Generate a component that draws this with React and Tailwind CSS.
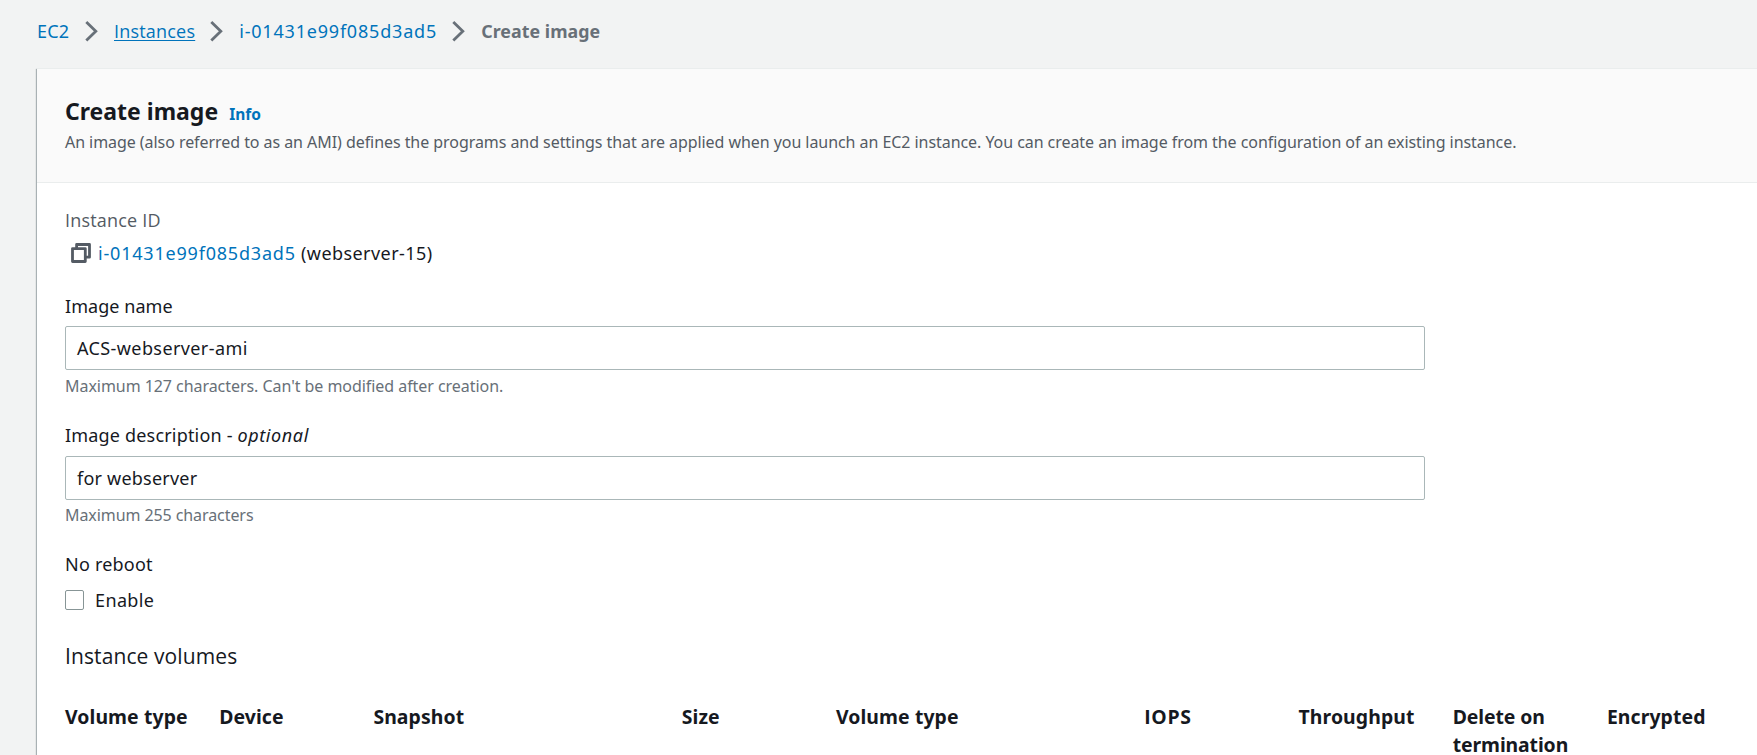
import React from "react";

function Chevron() {
  return (
    <svg className="mt-[2px] h-[21px] w-[13px] shrink-0" viewBox="0 0 13 21" fill="none" stroke="#687078" strokeWidth="2.8">
      <path d="M1.3 1L10.8 10.3L1.3 19.6" />
    </svg>
  );
}

function CopyIcon() {
  return (
    <svg className="mt-[2px] h-[20px] w-[20px] shrink-0" viewBox="0 0 20 20" fill="none" stroke="#545b64" strokeWidth="2.8" strokeLinejoin="round">
      <path d="M5.6 5V1.5H18.5V14.2H15" />
      <path d="M1.5 5.6H14.3V18.5H1.5Z" />
    </svg>
  );
}

const columns = [
  { label: "Volume type", cls: "w-[154.2px]" },
  { label: "Device", cls: "w-[154.2px]" },
  { label: "Snapshot", cls: "w-[308.4px]" },
  { label: "Size", cls: "w-[154.2px]" },
  { label: "Volume type", cls: "w-[308.4px]" },
  { label: "IOPS", cls: "w-[154.2px] font-['Open_Sans',sans-serif] tracking-[0.6px]" },
  { label: "Throughput", cls: "w-[154.2px]" },
  { label: "Delete on termination", cls: "w-[154.2px] pr-6 tracking-[-0.1px]" },
  { label: "Encrypted", cls: "w-[150px]" },
];

export default function App() {
  return (
    <div className="h-[755px] w-full overflow-hidden bg-[#f2f3f3] font-['Noto_Sans',sans-serif] text-[18px] leading-[24px] text-[#16191f]">
      <nav className="flex h-[68px] items-start pt-[19px] pl-[37px] whitespace-nowrap text-[#0073bb]">
        <a className="w-[48px] tracking-[0.2px]">EC2</a>
        <Chevron />
        <a className="mr-[15px] ml-[16px] font-['Open_Sans',sans-serif] tracking-[0.2px] underline underline-offset-2">Instances</a>
        <Chevron />
        <a className="ml-[16px] w-[213px] tracking-[0.8px]">i-01431e99f085d3ad5</a>
        <Chevron />
        <span className="ml-[16px] text-[17.8px] font-bold tracking-[0.05px] text-[#687078]">Create image</span>
      </nav>
      <main className="ml-[37px] h-[687px] border-t border-[#eaeded] bg-white shadow-[-1px_1px_1px_0_rgba(0,28,36,0.3)]">
        <header className="h-[114px] border-b border-[#eaeded] bg-[#fafafa] pt-[27px] pl-[28px]">
          <div className="flex items-baseline">
            <h1 className="text-[23px] leading-[30px] font-bold">Create image</h1>
            <a className="ml-[11px] text-[15.5px] font-bold text-[#0073bb]">Info</a>
          </div>
          <p className="mt-[5px] text-[16px] leading-[22px] tracking-[-0.058px] whitespace-nowrap text-[#545b64]">
            An image (also referred to as an AMI) defines the programs and settings that are applied when you launch an EC2 instance. You can create an image from the configuration of an existing instance.
          </p>
        </header>
        <section className="pt-[25px] pl-[28px]">
          <div className="font-['Open_Sans',sans-serif] tracking-[0.2px] text-[#545b64]">Instance ID</div>
          <div className="mt-[9px] flex pl-[6px] whitespace-nowrap">
            <CopyIcon />
            <a className="ml-[7px] w-[203px] tracking-[0.8px] text-[#0073bb]">i-01431e99f085d3ad5</a>
            <span className="tracking-[0.43px]">(webserver-15)</span>
          </div>
          <label className="mt-[29px] block tracking-[0.05px]">Image name</label>
          <div className="mt-[8px] flex h-[44px] w-[1360px] items-center rounded-[2px] border border-[#aab7b8] bg-white px-[11px] tracking-[0.4px]">ACS-webserver-ami</div>
          <p className="mt-[5px] text-[16px] leading-[22px] tracking-[-0.05px] text-[#687078]">Maximum 127 characters. Can't be modified after creation.</p>
          <label className="mt-[26px] block tracking-[0.18px]">Image description - <i className="tracking-[0.6px]">optional</i></label>
          <div className="mt-[9px] flex h-[44px] w-[1360px] items-center rounded-[2px] border border-[#aab7b8] bg-white px-[11px] tracking-[0.22px]">for webserver</div>
          <p className="mt-[4px] text-[16px] leading-[22px] tracking-[-0.08px] text-[#687078]">Maximum 255 characters</p>
          <div className="mt-[26px] tracking-[0.22px]">No reboot</div>
          <label className="mt-[12px] flex tracking-[0.38px]">
            <span className="mt-[2px] mr-[11px] h-[20px] w-[19px] rounded-[2px] border-[1.5px] border-[#879596] bg-white" />
            Enable
          </label>
          <h2 className="mt-[30px] font-['Open_Sans',sans-serif] text-[21px] leading-[28px] tracking-[0.1px]">Instance volumes</h2>
          <div className="mt-[33px] flex text-[19.4px] leading-[28px] font-bold tracking-[0.1px]">
            {columns.map((c, i) => (
              <div key={i} className={c.cls + " shrink-0"}>{c.label}</div>
            ))}
          </div>
        </section>
      </main>
    </div>
  );
}
